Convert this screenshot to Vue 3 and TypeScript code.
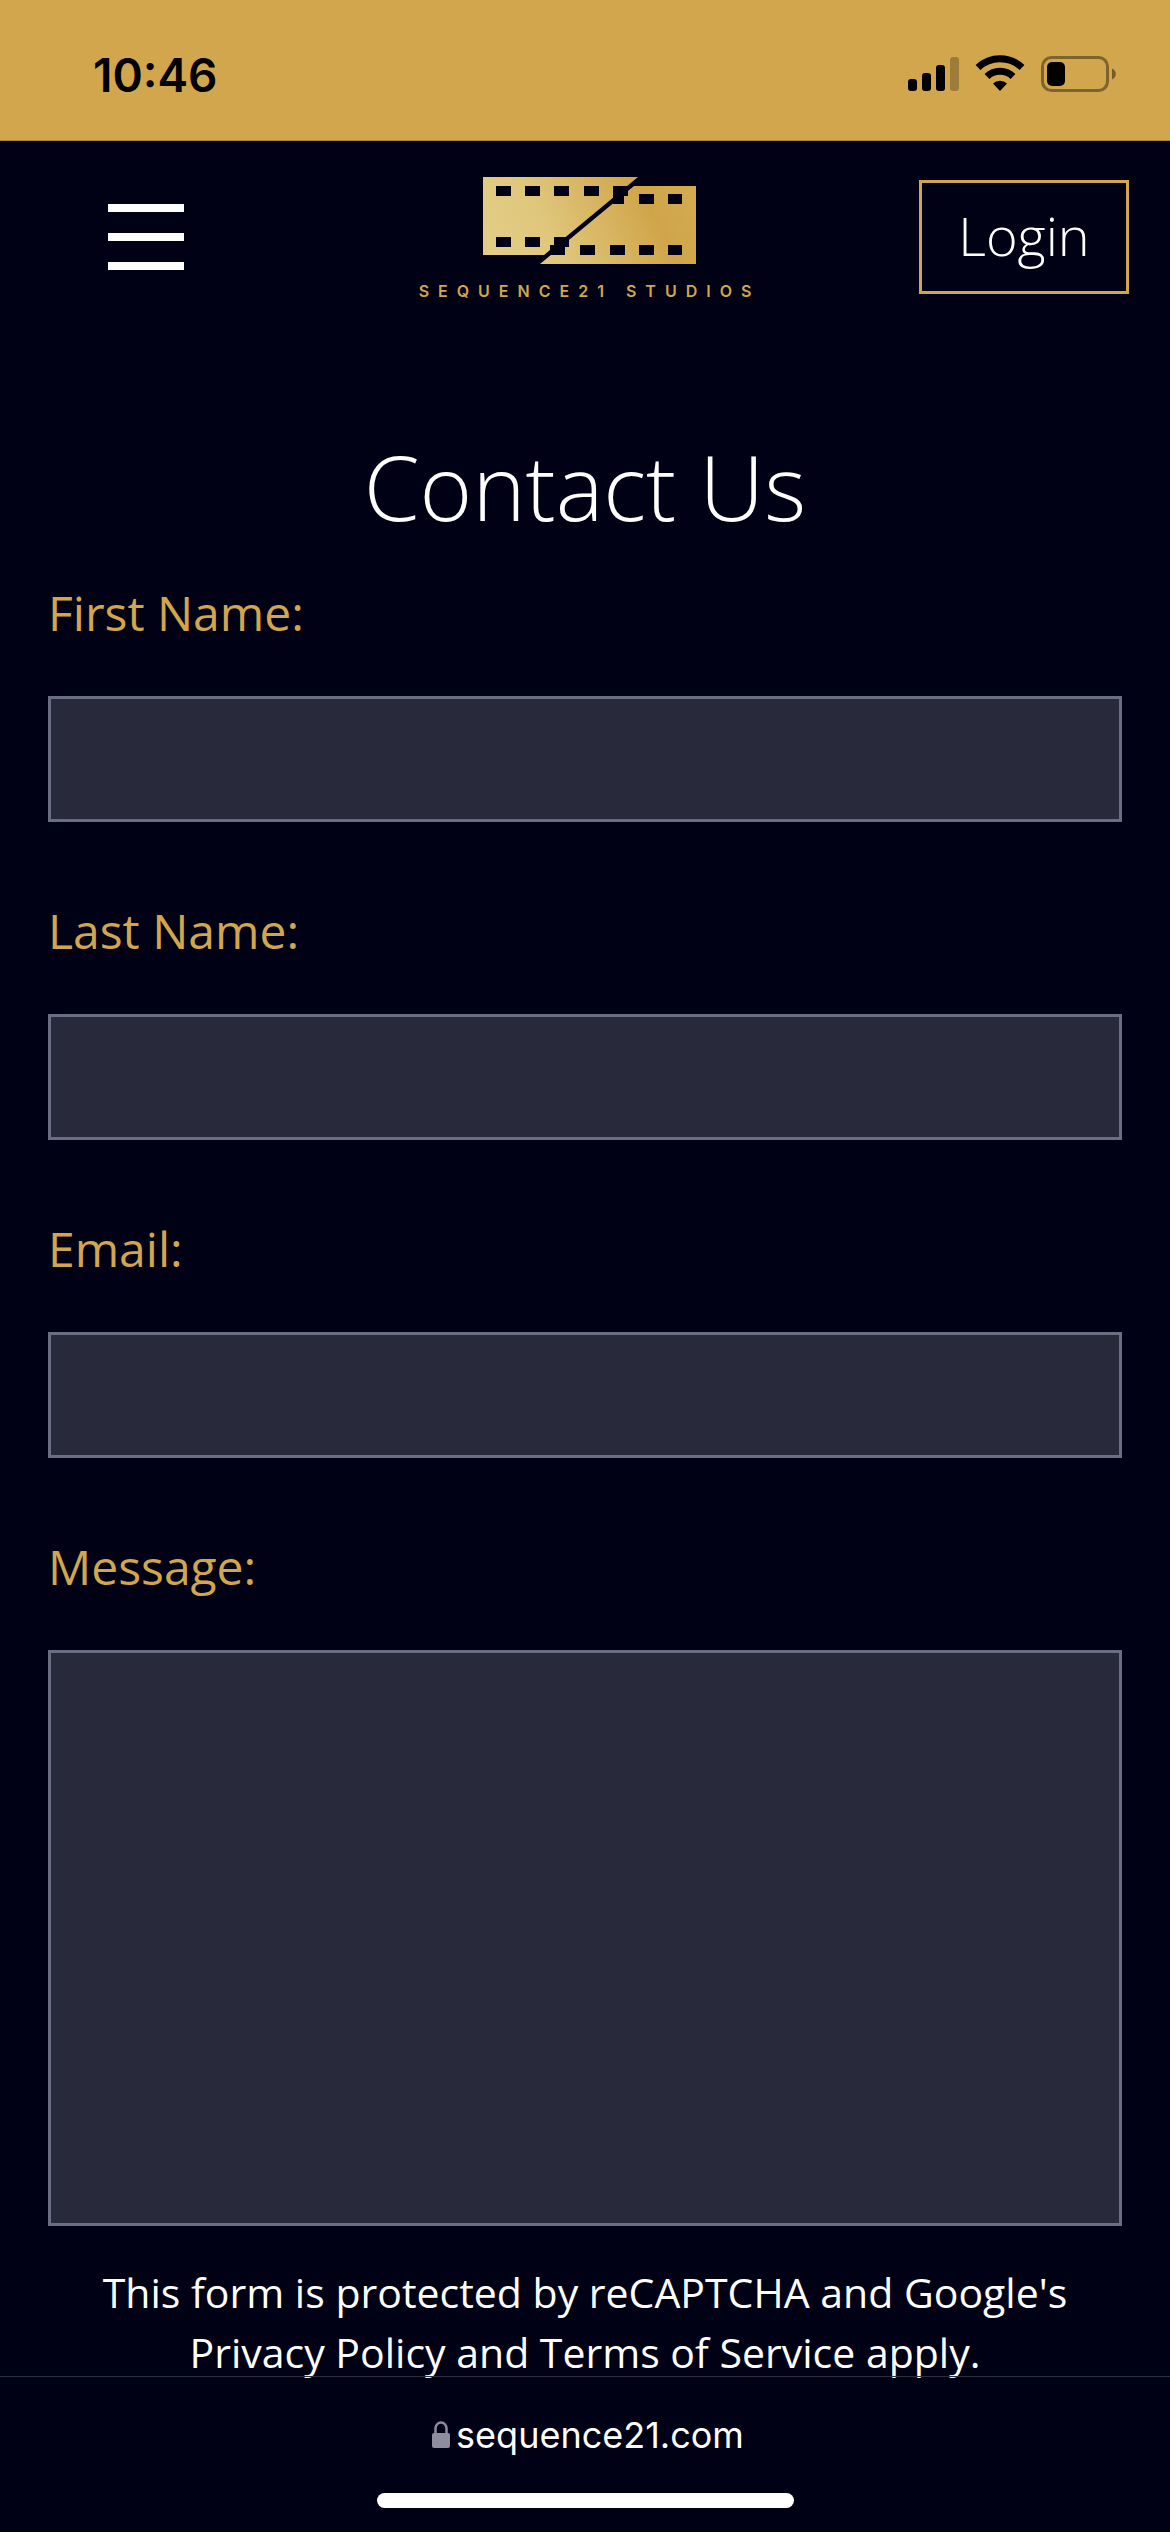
<script setup lang="ts">
import { ref } from 'vue'

interface Field {
  id: string
  label: string
  type: 'text' | 'email'
}

const fields: Field[] = [
  { id: 'first-name', label: 'First Name:', type: 'text' },
  { id: 'last-name', label: 'Last Name:', type: 'text' },
  { id: 'email', label: 'Email:', type: 'email' },
]

const values = ref<Record<string, string>>({ 'first-name': '', 'last-name': '', email: '' })
const message = ref('')

// Perforations of the film strip: [x, y, width]
const holes: [number, number, number][] = [
  [13, 9, 15], [42, 9, 15], [71, 9, 15], [101, 9, 15], [130, 9, 15],
  [13, 60, 15], [42, 60, 15], [71, 60, 15],
  [156, 17, 15], [185, 17, 14], [130, 17, 11],
  [67, 68, 15], [97, 68, 15], [127, 68, 15], [156, 68, 15], [185, 68, 14],
]
</script>

<template>
  <div class="screen">
    <div class="status">
      <span class="time">10:46</span>
      <svg class="indicators" width="210" height="40" viewBox="0 0 210 40" aria-hidden="true">
        <rect x="2" y="27" width="9" height="12" rx="3" />
        <rect x="16" y="21" width="9" height="18" rx="3" />
        <rect x="30" y="13" width="9" height="26" rx="3" />
        <rect x="44" y="5" width="9" height="34" rx="3" fill-opacity="0.25" />
        <g fill="none" stroke="#000" stroke-width="7">
          <path d="M72 15.500a32 32 0 0 1 44 0" />
          <path d="M81 24.500a19 19 0 0 1 26 0" />
        </g>
        <path d="M94 39l-7-7.500a10 10 0 0 1 14 0z" />
        <rect x="136.500" y="5.500" width="65" height="33" rx="9" fill="none" stroke="#000" stroke-opacity="0.4" stroke-width="3" />
        <rect x="141" y="10" width="18" height="24" rx="5" />
        <path d="M206 16.500c5 2 5 9 0 11z" fill-opacity="0.45" />
      </svg>
    </div>

    <header class="header">
      <button class="menu" type="button" aria-label="Menu">
        <span class="bar"></span>
        <span class="bar"></span>
        <span class="bar"></span>
      </button>
      <a class="logo" href="#">
        <svg class="mark" width="222" height="88" viewBox="-9 0 222 88" aria-hidden="true">
          <defs>
            <linearGradient id="gold" x1="0" y1="0.600" x2="1" y2="0.400">
              <stop offset="0" stop-color="#e2cc86" />
              <stop offset="0.300" stop-color="#dfc67b" />
              <stop offset="0.800" stop-color="#d0a54a" />
              <stop offset="1" stop-color="#d3aa50" />
            </linearGradient>
            <mask id="perforations">
              <rect width="214" height="88" fill="#fff" />
              <rect v-for="([x, y, w], i) in holes" :key="i" :x="x" :y="y" :width="w" height="10" fill="#000" />
            </mask>
          </defs>
          <path
            d="M0 0H155L61 78H0zM151 9H213V87H57z"
            fill="url(#gold)"
            mask="url(#perforations)"
          />
        </svg>
        <span class="wordmark">SEQUENCE21 STUDIOS</span>
      </a>
      <a class="login" href="#">Login</a>
    </header>

    <main class="main">
      <h1 class="title">Contact Us</h1>
      <form class="form" @submit.prevent>
        <div v-for="f in fields" :key="f.id" class="field">
          <label :for="f.id">{{ f.label }}</label>
          <input :id="f.id" v-model="values[f.id]" :type="f.type" />
        </div>
        <div class="field">
          <label for="message">Message:</label>
          <textarea id="message" v-model="message"></textarea>
        </div>
      </form>
      <p class="notice">
        This form is protected by reCAPTCHA and Google's Privacy Policy and Terms of Service apply.
      </p>
    </main>

    <footer class="toolbar">
      <div class="address">
        <svg width="18" height="28" viewBox="0 0 18 28" aria-hidden="true">
          <path d="M3.500 13V7.500a5.500 6 0 0 1 11 0V13" fill="none" stroke="#8d8d9f" stroke-width="2.500" />
          <rect y="12" width="18" height="15" rx="2" fill="#8d8d9f" />
        </svg>
        <span>sequence21.com</span>
      </div>
      <div class="home"></div>
    </footer>
  </div>
</template>

<style>
body {
  background: #000115;
}
</style>

<style scoped>
.screen {
  display: flex;
  flex-direction: column;
  min-height: 100vh;
  background: #000115;
  color: #fff;
  font-family: 'Open Sans', 'Noto Sans', sans-serif;
}

.status {
  flex: none;
  display: flex;
  justify-content: space-between;
  box-sizing: border-box;
  height: 141px;
  padding: 52px 54px 0 93px;
  border-bottom: 1px solid #a98539;
  background: #d2a64d;
  color: #000;
}

.time {
  font: 600 46px/46px Inter, sans-serif;
}

.header {
  flex: none;
  display: grid;
  grid-template-columns: 1fr auto 1fr;
  align-items: center;
  height: 192px;
}

.menu {
  display: flex;
  flex-direction: column;
  gap: 21px;
  width: 76px;
  margin-left: 108px;
  padding: 0;
  border: 0;
  background: none;
}

.bar {
  height: 8px;
  background: #fff;
}

.logo {
  display: flex;
  flex-direction: column;
  align-items: center;
  gap: 16px;
  padding-top: 4px;
  color: #d2a64d;
  text-decoration: none;
}

.mark {
  display: block;
}

.wordmark {
  margin-right: -9px;
  font: 600 16px/20px Inter, sans-serif;
  letter-spacing: 9px;
  white-space: nowrap;
}

.login {
  justify-self: end;
  box-sizing: border-box;
  width: 210px;
  margin-right: 41px;
  padding-bottom: 4px;
  border: 3px solid #d2a64d;
  color: #fff;
  font-size: 54px;
  font-weight: 300;
  line-height: 104px;
  text-align: center;
  text-decoration: none;
}

.main {
  flex: 1 0 0;
  min-height: 0;
  padding: 103px 48px 0;
}

.title {
  margin: 0 0 47px;
  font-size: 90px;
  font-weight: 300;
  line-height: 100px;
  text-align: center;
}

.form {
  display: flex;
  flex-direction: column;
  gap: 79px;
}

.field {
  display: flex;
  flex-direction: column;
  gap: 53px;
}

label {
  color: #d2a64d;
  font-size: 48px;
  line-height: 60px;
}

input,
textarea {
  display: block;
  box-sizing: border-box;
  width: 100%;
  height: 126px;
  padding: 0 24px;
  border: 3px solid #6b6e82;
  border-radius: 0;
  outline: 0;
  background: #282a3c;
  color: #fff;
  font: inherit;
  font-size: 48px;
}

textarea {
  height: 576px;
  padding: 24px;
  resize: none;
}

.notice {
  height: 114px;
  margin: 36px 0 0;
  font-size: 41px;
  line-height: 60px;
  text-align: center;
}

.toolbar {
  flex: none;
  display: flex;
  flex-direction: column;
  align-items: center;
  justify-content: space-between;
  box-sizing: border-box;
  height: 156px;
  padding: 36px 0 24px;
  border-top: 1px solid #2a2f3f;
}

.address {
  display: flex;
  align-items: center;
  gap: 6px;
  padding-left: 6px;
  font: 400 36px/44px Inter, sans-serif;
}

.home {
  width: 417px;
  height: 15px;
  border-radius: 8px;
  background: #fff;
}
</style>
